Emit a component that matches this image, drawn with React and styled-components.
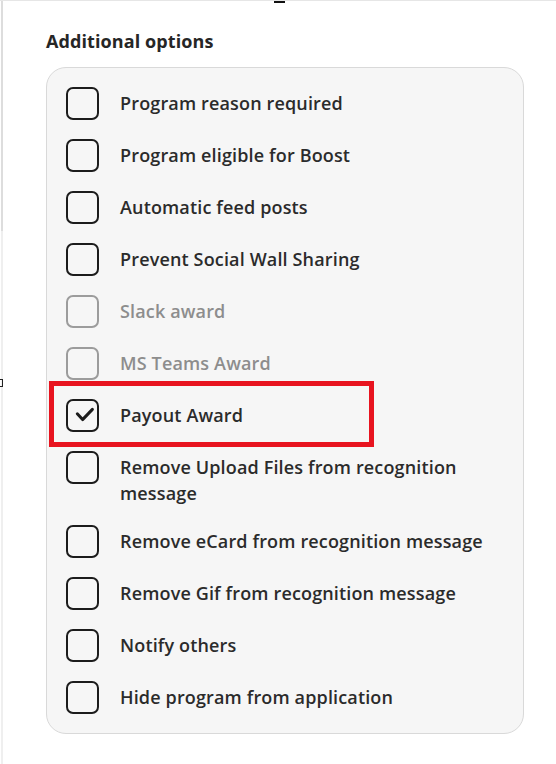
import React from "react";
import styled, { createGlobalStyle } from "styled-components";

const Global = createGlobalStyle`
  html, body { margin: 0; padding: 0; background: #ffffff; }
  body { font-family: "Open Sans", "Noto Sans", Arial, sans-serif; }
`;

const Page = styled.div`
  position: relative;
  width: 556px;
  height: 764px;
  box-sizing: border-box;
  border-top: 1px solid #e6e6e6;
  padding: 28px 32px 0 46px;
  overflow: hidden;
`;

const EdgeLine = styled.div`
  position: absolute;
  left: 1px;
  top: 0;
  width: 2px;
  height: 764px;
  background: linear-gradient(#dddddd 0 230px, #efefef 230px 100%);
`;

const Mark = styled.span`
  position: absolute;
  left: ${(p) => p.$x}px;
  top: ${(p) => p.$y}px;
  width: ${(p) => p.$w}px;
  height: ${(p) => p.$h}px;
  background: ${(p) => (p.$hollow ? "transparent" : "#111")};
  border: ${(p) => (p.$hollow ? "1px solid #222" : "none")};
  box-sizing: border-box;
`;

const Title = styled.h2`
  margin: 0 0 13px 0;
  font-size: 18px;
  line-height: 25px;
  font-weight: 700;
  letter-spacing: 0.1px;
  color: #262626;
`;

const Panel = styled.div`
  width: 478px;
  box-sizing: border-box;
  background: #f6f6f6;
  border: 1px solid #d9d9d9;
  border-radius: 20px;
  padding: 19px;
  display: flex;
  flex-direction: column;
  gap: 19px;
`;

const Row = styled.label`
  position: relative;
  display: flex;
  align-items: flex-start;
  gap: 21px;
`;

const Box = styled.span`
  flex: none;
  width: 33px;
  height: 33px;
  box-sizing: border-box;
  border: 2px solid ${(p) => (p.$disabled ? "#9c9c9c" : "#1c1c1c")};
  border-radius: 7px;
  display: flex;
  align-items: center;
  justify-content: center;
`;

const Label = styled.span`
  padding-top: 3px;
  font-size: 18px;
  line-height: 26px;
  font-weight: 600;
  letter-spacing: 0.15px;
  color: ${(p) => (p.$disabled ? "#8d8d8d" : "#2b2b2b")};
`;

const Highlight = styled.span`
  position: absolute;
  left: -17px;
  top: -18px;
  width: 325px;
  height: 66px;
  box-sizing: border-box;
  border: 5px solid #e8141f;
  pointer-events: none;
`;

const CheckIcon = styled.svg`
  width: 33px;
  height: 33px;
  margin: -2px;
  flex: none;
`;

const options = [
  { label: "Program reason required" },
  { label: "Program eligible for Boost" },
  { label: "Automatic feed posts" },
  { label: "Prevent Social Wall Sharing" },
  { label: "Slack award", disabled: true },
  { label: "MS Teams Award", disabled: true },
  { label: "Payout Award", checked: true, highlight: true },
  { label: "Remove Upload Files from recognition message" },
  { label: "Remove eCard from recognition message" },
  { label: "Remove Gif from recognition message" },
  { label: "Notify others" },
  { label: "Hide program from application" },
];

function Check() {
  return (
    <CheckIcon viewBox="0 0 33 33">
      <polyline
        points="11.3,14.8 16.6,20.6 26.4,10.4"
        fill="none"
        stroke="#1c1c1c"
        strokeWidth="3"
        strokeLinecap="round"
        strokeLinejoin="round"
      />
    </CheckIcon>
  );
}

export default function App() {
  return (
    <>
      <Global />
      <Page>
        <EdgeLine />
        <Mark $x={274} $y={-1} $w={11} $h={3} />
        <Mark $x={-2} $y={378} $w={5} $h={8} $hollow />
        <Title>Additional options</Title>
        <Panel>
          {options.map((o) => (
            <Row key={o.label}>
              <Box $disabled={o.disabled}>{o.checked && <Check />}</Box>
              <Label $disabled={o.disabled}>{o.label}</Label>
              {o.highlight && <Highlight />}
            </Row>
          ))}
        </Panel>
      </Page>
    </>
  );
}
